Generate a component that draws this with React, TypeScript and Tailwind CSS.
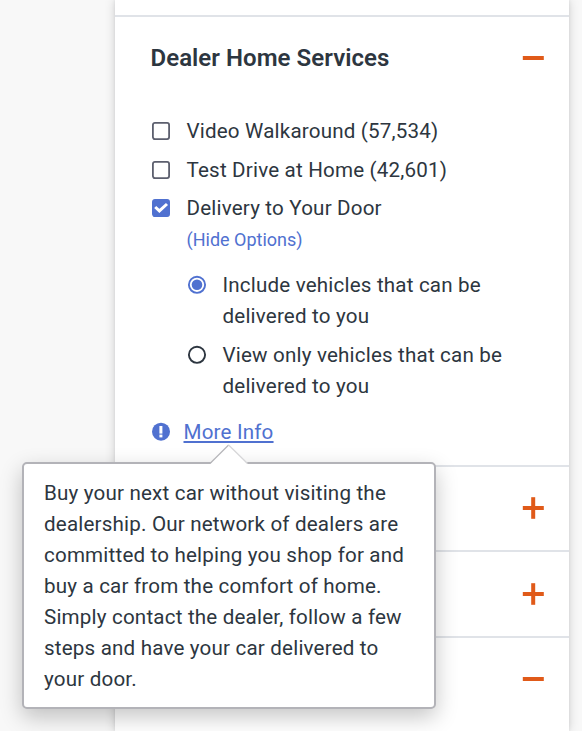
import React from "react";

const body = "text-[20.6px] leading-[31px] tracking-[0.18px] whitespace-nowrap";

function Toggle({ open }: { open?: boolean }) {
  return (
    <svg width="22" height="22" viewBox="0 0 22 22" className="text-[#e05a19]" fill="currentColor">
      <rect x="0.8" y="9" width="21" height="4" />
      {!open && <rect x="9.2" y="0.2" width="4" height="21.6" />}
    </svg>
  );
}

function Checkbox({ checked }: { checked?: boolean }) {
  return (
    <svg width="20" height="20" viewBox="0 0 20 20" fill="none" className="mb-[2px] shrink-0">
      <rect
        x="1.9" y="1.9" width="16.2" height="16.2" rx="2"
        stroke={checked ? "#5071d0" : "#5c5f6e"}
        fill={checked ? "#5071d0" : "#fff"}
        strokeWidth="1.8"
      />
      {checked && <path d="M4.2 9 8.4 12.9 16 6" stroke="#fff" strokeWidth="3" />}
    </svg>
  );
}

function Radio({ checked }: { checked?: boolean }) {
  return (
    <svg width="20" height="20" viewBox="0 0 20 20" fill="none" className="mt-[5px] shrink-0">
      <circle cx="10" cy="9.8" r="8.1" stroke={checked ? "#5071d0" : "#2d3640"} strokeWidth="1.9" />
      {checked && <circle cx="10" cy="9.8" r="5.3" fill="#5071d0" />}
    </svg>
  );
}

function CheckRow({ label, checked }: { label: string; checked?: boolean }) {
  return (
    <div className={`flex items-center gap-[15.5px] ${body}`}>
      <Checkbox checked={checked} />
      <span>{label}</span>
    </div>
  );
}

function RadioRow({ lines, checked }: { lines: string[]; checked?: boolean }) {
  return (
    <div className={`flex gap-[15.5px] ${body}`}>
      <Radio checked={checked} />
      <div>{lines.map((l) => <div key={l}>{l}</div>)}</div>
    </div>
  );
}

const tip = [
  "Buy your next car without visiting the",
  "dealership. Our network of dealers are",
  "committed to helping you shop for and",
  "buy a car from the comfort of home.",
  "Simply contact the dealer, follow a few",
  "steps and have your car delivered to",
  "your door.",
];

function Tooltip() {
  return (
    <div className="absolute top-[462px] left-[22px] h-[247px] w-[414px] rounded-[5px] border-2 border-[#b3b3b8] bg-white px-[20px] pt-[14px] shadow-[0_8px_22px_rgba(0,0,0,0.23)]">
      <svg className="absolute -top-[20px] left-[184px]" width="42" height="20" viewBox="0 0 42 20">
        <path d="M2 20 20.6 1 39.5 20Z" fill="#fff" />
        <path d="M2 19.5 20.6 1" stroke="#b5b5b9" strokeWidth="1.2" fill="none" />
        <path d="M20.6 1 39.5 19.5" stroke="#d6d6d8" strokeWidth="1.2" fill="none" />
      </svg>
      {tip.map((l) => <div key={l} className={body}>{l}</div>)}
    </div>
  );
}

export default function App() {
  return (
    <div className="relative h-[731px] w-[582px] overflow-hidden bg-[#f8f8f8] pl-[115px] font-['Roboto',sans-serif] text-[#2d3640]">
      <div className="h-full w-[454px] bg-white shadow-[0_0_3px_rgba(60,70,90,0.1),0_0_10px_rgba(0,0,0,0.17)]">
        <div className="h-[17px] border-b-2 border-[#e0e3e8]" />
        <section className="h-[450px] border-b-2 border-[#e0e3e8] pr-[25px] pl-[36px]">
          <header className="flex h-[82px] items-center justify-between">
            <h2 className="-ml-[0.5px] text-[24px] leading-[32px] font-semibold tracking-[0.05px] whitespace-nowrap">Dealer Home Services</h2>
            <Toggle open />
          </header>
          <div className="flex flex-col gap-[8px] pt-[17px]">
            <CheckRow label="Video Walkaround (57,534)" />
            <CheckRow label="Test Drive at Home (42,601)" />
            <div className="-mt-px"><CheckRow label="Delivery to Your Door" checked /></div>
          </div>
          <div className="pl-[36px]">
            <div className="-ml-[0.5px] mt-[2px] h-[28px] text-[18px] leading-[28px] whitespace-nowrap text-[#5071d0]">(Hide Options)</div>
            <div className="flex flex-col gap-[8px] pt-[16px]">
              <RadioRow checked lines={["Include vehicles that can be", "delivered to you"]} />
              <RadioRow lines={["View only vehicles that can be", "delivered to you"]} />
            </div>
          </div>
          <div className={`mt-[15px] flex items-center gap-[12.5px] text-[#5071d0] ${body}`}>
            <svg width="20" height="20" viewBox="0 0 20 20" className="mb-[2px]">
              <circle cx="10" cy="9.7" r="9" fill="#5071d0" />
              <rect x="8.4" y="4" width="3" height="7.6" fill="#fff" />
              <rect x="8.4" y="12.6" width="3" height="2.8" fill="#fff" />
            </svg>
            <span className="underline decoration-2 underline-offset-[2px]">More Info</span>
          </div>
        </section>
        <div className="flex h-[85px] items-center justify-end border-b-2 border-[#e0e3e8] pr-[25px] pb-px"><Toggle /></div>
        <div className="flex h-[86px] items-center justify-end border-b-2 border-[#e0e3e8] pr-[25px]"><Toggle /></div>
        <div className="flex h-[82px] items-center justify-end pr-[25px]"><Toggle open /></div>
      </div>
      <Tooltip />
    </div>
  );
}
